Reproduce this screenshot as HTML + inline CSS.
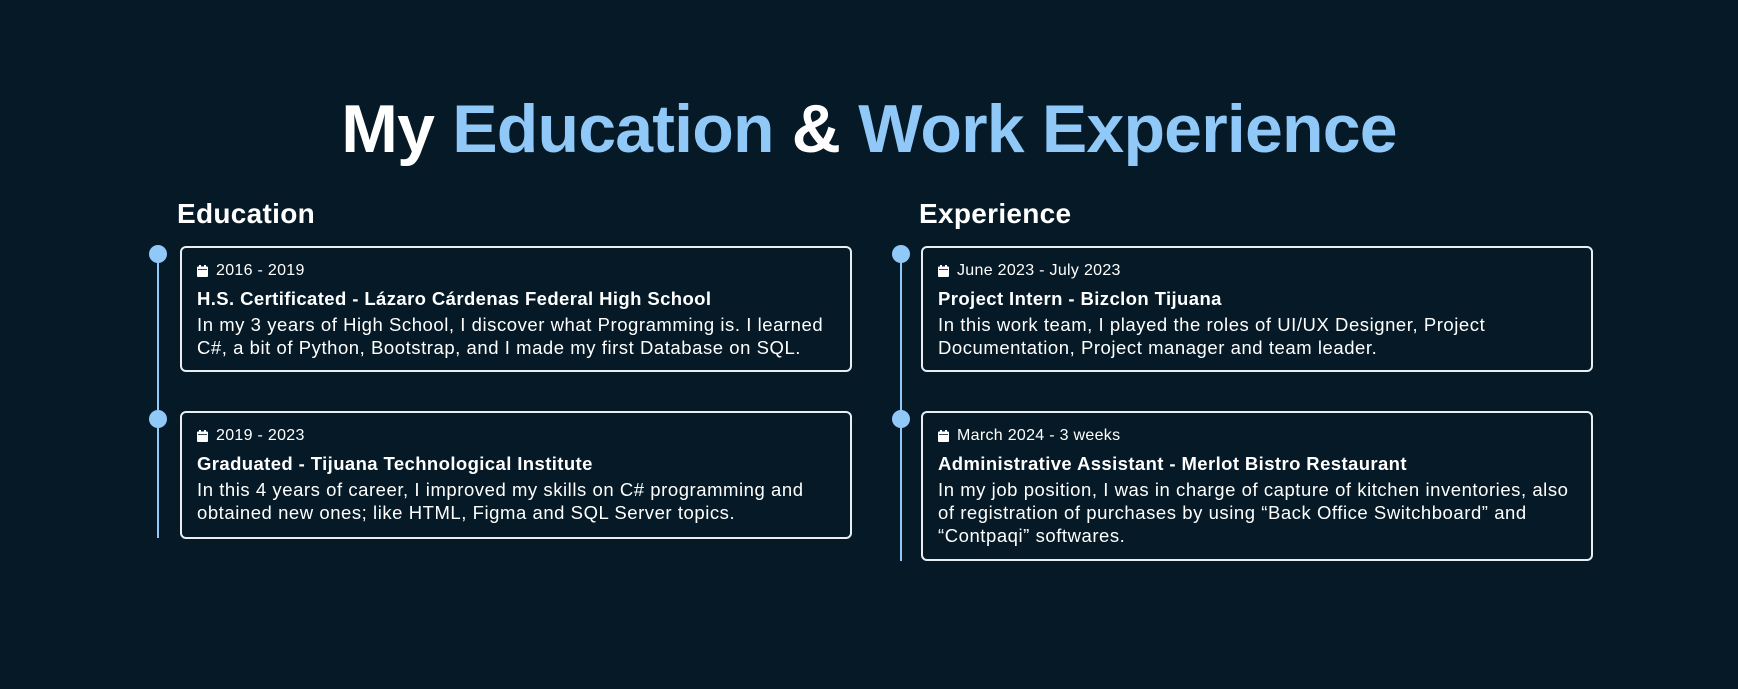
<!DOCTYPE html>
<html><head><meta charset="utf-8"><style>
body{margin:0;width:1738px;height:689px;background:#051a26;font-family:"Liberation Sans",sans-serif;color:#fff;position:relative;overflow:hidden}
h1{position:absolute;top:90px;left:0;width:1738px;text-align:center;margin:0;font-size:68px;font-weight:bold;letter-spacing:-0.8px}
.b{color:#90c8f8}
h2{position:absolute;margin:0;font-size:28px;font-weight:bold;top:198px;letter-spacing:0.3px}
.line{position:absolute;width:2px;background:#90c8f8}
.dot{position:absolute;width:18px;height:18px;border-radius:50%;background:#90c8f8}
.card{position:absolute;box-sizing:border-box;border:2px solid #e8eef2;border-radius:6px;padding:14px 0 0 15px;white-space:nowrap}
.d{font-size:16px;line-height:18px;display:flex;align-items:center;letter-spacing:0.3px}
.d svg{margin-right:8px}
.t{font-size:18.5px;font-weight:bold;margin-top:8px;line-height:22px;letter-spacing:0.4px}
.p{font-size:18.5px;line-height:23px;margin-top:3px;letter-spacing:0.55px}
</style></head><body>
<h1>My <span class="b">Education</span> &amp; <span class="b">Work Experience</span></h1>
<h2 style="left:177px">Education</h2>
<h2 style="left:919px">Experience</h2>
<div class="line" style="left:157px;top:254px;height:284px"></div>
<div class="dot" style="left:149px;top:245px"></div>
<div class="dot" style="left:149px;top:410px"></div>
<div class="line" style="left:900px;top:254px;height:307px"></div>
<div class="dot" style="left:892px;top:245px"></div>
<div class="dot" style="left:892px;top:410px"></div>

<div class="card" style="left:180px;top:246px;width:672px;height:126px">
<div class="d"><svg width="11" height="12" viewBox="0 0 11 12"><rect x="0" y="1.5" width="11" height="10.5" rx="1" fill="#fff"/><rect x="2" y="0" width="2" height="3" fill="#fff"/><rect x="7" y="0" width="2" height="3" fill="#fff"/><rect x="1" y="4" width="9" height="0.8" fill="#051a26"/></svg>2016 - 2019</div>
<div class="t">H.S. Certificated - Lázaro Cárdenas Federal High School</div>
<div class="p">In my 3 years of High School, I discover what Programming is. I learned<br>C#, a bit of Python, Bootstrap, and I made my first Database on SQL.</div>
</div>
<div class="card" style="left:180px;top:411px;width:672px;height:128px">
<div class="d"><svg width="11" height="12" viewBox="0 0 11 12"><rect x="0" y="1.5" width="11" height="10.5" rx="1" fill="#fff"/><rect x="2" y="0" width="2" height="3" fill="#fff"/><rect x="7" y="0" width="2" height="3" fill="#fff"/><rect x="1" y="4" width="9" height="0.8" fill="#051a26"/></svg>2019 - 2023</div>
<div class="t">Graduated - Tijuana Technological Institute</div>
<div class="p">In this 4 years of career, I improved my skills on C# programming and<br>obtained new ones; like HTML, Figma and SQL Server topics.</div>
</div>
<div class="card" style="left:921px;top:246px;width:672px;height:126px">
<div class="d"><svg width="11" height="12" viewBox="0 0 11 12"><rect x="0" y="1.5" width="11" height="10.5" rx="1" fill="#fff"/><rect x="2" y="0" width="2" height="3" fill="#fff"/><rect x="7" y="0" width="2" height="3" fill="#fff"/><rect x="1" y="4" width="9" height="0.8" fill="#051a26"/></svg>June 2023 - July 2023</div>
<div class="t">Project Intern - Bizclon Tijuana</div>
<div class="p">In this work team, I played the roles of UI/UX Designer, Project<br>Documentation, Project manager and team leader.</div>
</div>
<div class="card" style="left:921px;top:411px;width:672px;height:150px">
<div class="d"><svg width="11" height="12" viewBox="0 0 11 12"><rect x="0" y="1.5" width="11" height="10.5" rx="1" fill="#fff"/><rect x="2" y="0" width="2" height="3" fill="#fff"/><rect x="7" y="0" width="2" height="3" fill="#fff"/><rect x="1" y="4" width="9" height="0.8" fill="#051a26"/></svg>March 2024 - 3 weeks</div>
<div class="t">Administrative Assistant - Merlot Bistro Restaurant</div>
<div class="p">In my job position, I was in charge of capture of kitchen inventories, also<br>of registration of purchases by using “Back Office Switchboard” and<br>“Contpaqi” softwares.</div>
</div>
</body></html>
